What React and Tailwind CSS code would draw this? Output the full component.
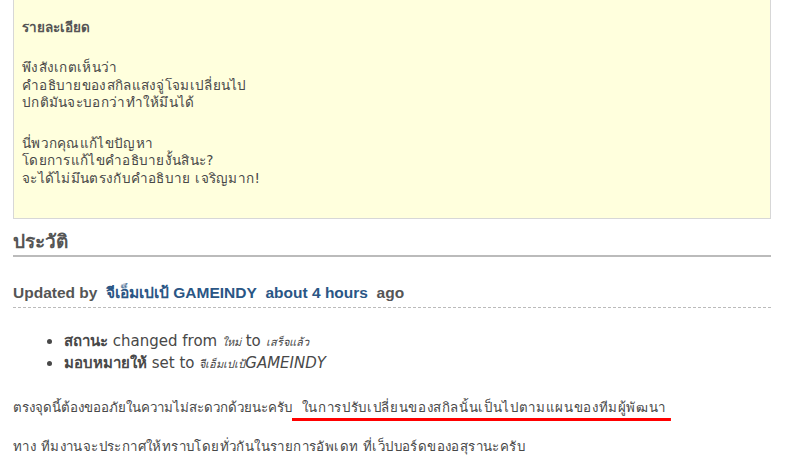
export default function App() {
  return (
    <div className="w-[794px] h-[475px] overflow-hidden bg-white text-[#484848]" style={{ fontFamily: '"DejaVu Sans", Verdana, sans-serif' }}>
      <div className="ml-[13px] w-[758px]">
        {/* description box */}
        <div className="bg-[#ffffdd] border-x border-b border-[#d7d7d7] px-[8px] pt-[18px] h-[219px]">
          <p className="font-bold text-[13.5px] leading-[18px] text-[#555]">รายละเอียด</p>
          <div className="mt-[23px] text-[13.5px] leading-[17.6px] tracking-[0.3px]">
            <p>พึงสังเกตเห็นว่า</p>
            <p>คำอธิบายของสกิลแสงจู่โจมเปลี่ยนไป</p>
            <p>ปกติมันจะบอกว่าทำให้มึนได้</p>
          </div>
          <div className="mt-[23px] text-[13.5px] leading-[17.6px] tracking-[0.3px]">
            <p>นี่พวกคุณแก้ไขปัญหา</p>
            <p>โดยการแก้ไขคำอธิบายงั้นสินะ?</p>
            <p>จะได้ไม่มึนตรงกับคำอธิบาย เจริญมาก!</p>
          </div>
        </div>

        {/* history */}
        <h3 className="mt-[10px] pb-[2px] border-b-2 border-[#bbb] text-[19px] leading-[24px] font-bold text-[#555]">ประวัติ</h3>

        <h4 className="mt-[26px] pb-[4px] border-b border-dashed border-[#bbb] text-[15.5px] leading-[20px] font-bold text-[#555]" style={{ fontFamily: '"Liberation Sans", Arial, sans-serif' }}>
          Updated by <span className="text-[#2a5685]">&nbsp;จีเอ็มเปเป้ GAMEINDY</span>
          <span className="text-[#2a5685]">&nbsp; about 4 hours</span> &nbsp;ago
        </h4>

        <ul className="mt-[23px] ml-[50px] list-disc text-[15px] leading-[21px]">
          <li className="pl-[1px]">
            <strong>สถานะ</strong> changed from <i className="text-[11px]">ใหม่</i> to <i className="text-[11px]">เสร็จแล้ว</i>
          </li>
          <li className="pl-[1px]">
            <strong>มอบหมายให้</strong> set to <i className="text-[11px]">จีเอ็มเปเป้</i><i>GAMEINDY</i>
          </li>
        </ul>

        <p className="mt-[24px] text-[13.3px] leading-[18px]">
          ตรงจุดนี้ต้องขออภัยในความไม่สะดวกด้วยนะครับ
          <span className="tracking-[0.65px] underline decoration-[#ff0000] decoration-[3px] underline-offset-[6px]">&nbsp; ในการปรับเปลี่ยนของสกิลนั้นเป็นไปตามแผนของทีมผู้พัฒนา&nbsp;</span>
        </p>

        <p className="mt-[21px] text-[13.3px] leading-[18px] tracking-[0.4px]">
          ทาง ทีมงานจะประกาศให้ทราบโดยทั่วกันในรายการอัพเดท ที่เว็ปบอร์ดของอสุรานะครับ
        </p>
      </div>
    </div>
  );
}
